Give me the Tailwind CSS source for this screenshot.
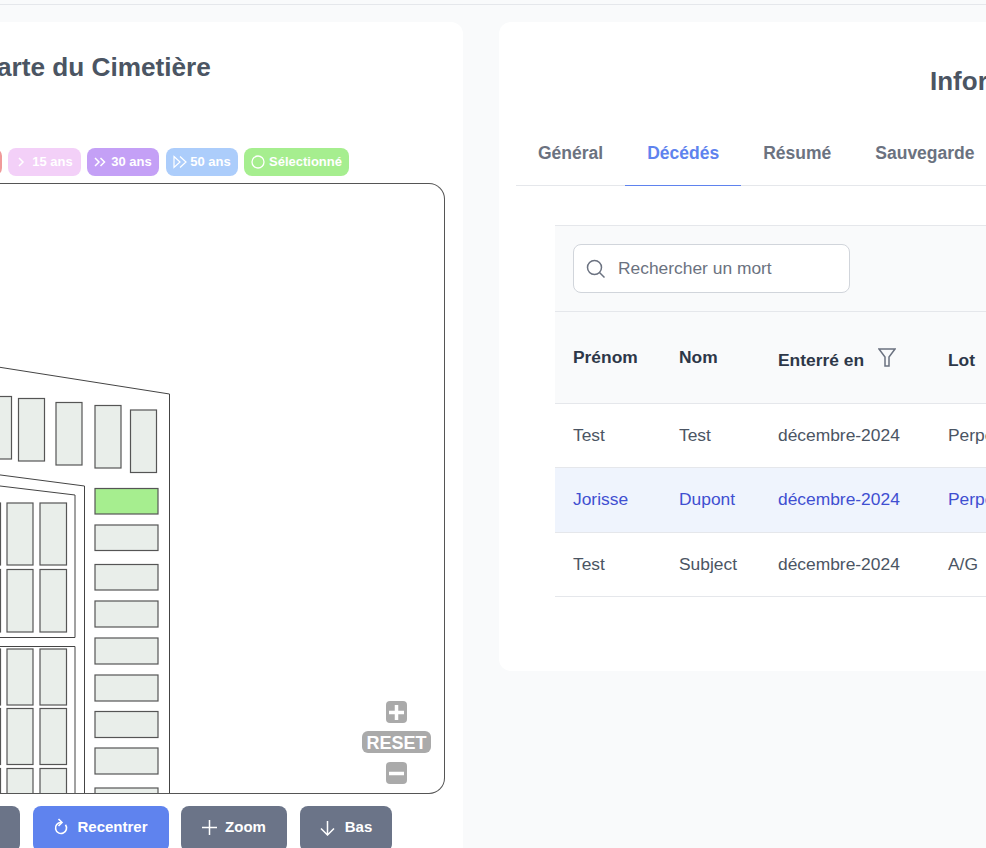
<!DOCTYPE html>
<html lang="fr">
<head>
	<meta charset="UTF-8">
	<title>Carte du Cimetière</title>
	<script src="https://cdn.jsdelivr.net/npm/@tailwindcss/browser@4"></script>
</head>
<body class="bg-[#f9fafb] font-['Liberation_Sans',Arial,sans-serif] overflow-hidden">
	<div class="w-[986px] h-[848px] overflow-hidden">
		<div class="h-[5px] border-b border-[#e5e7eb]"></div>

		<div class="flex items-start gap-[36px] ml-[-36px] mt-[17px] w-[1500px]">
			<!-- carte -->
			<section class="w-[499px] shrink-0 h-[900px] bg-white rounded-xl px-[18px] pt-[29px]">
				<h2 class="text-[26.2px] leading-[32px] font-bold text-[#4b5563] whitespace-nowrap ml-[-4px]">Carte du Cimetière</h2>

				<div class="flex gap-[6px] mt-[65px] ml-[-52px] h-[28px] text-white text-[13px] font-bold">
					<span class="w-[72px] rounded-lg bg-[#f09a9a] flex items-center justify-center">5 ans</span>
					<span class="w-[73px] rounded-lg bg-[#f3d0f8] flex items-center justify-center gap-[7px] pl-[1px]">
						<svg class="w-[8px] h-[10px]" viewBox="0 0 8 10" fill="none" stroke="currentColor" stroke-width="1.500"><path d="M2 1l4 4-4 4"/></svg>
						15 ans
					</span>
					<span class="w-[72px] mr-[1px] rounded-lg bg-[#c4a0f6] flex items-center justify-center gap-[5px]">
						<svg class="w-[12px] h-[10px]" viewBox="0 0 12 10" fill="none" stroke="currentColor" stroke-width="1.500"><path d="M1 1l4 4-4 4M6.500 1l4 4-4 4"/></svg>
						30 ans
					</span>
					<span class="w-[72px] rounded-lg bg-[#accdfb] flex items-center justify-center gap-[3px]">
						<svg class="w-[14px] h-[14px]" viewBox="0 0 14 14" fill="none" stroke="currentColor" stroke-width="1.200"><path d="M1 1.500l6 5.500-6 5.500zM7 1.500l6 5.500-6 5.500"/></svg>
						50 ans
					</span>
					<span class="w-[105px] rounded-lg bg-[#a6ee8f] flex items-center justify-center gap-[4px]">
						<svg class="w-[14px] h-[14px]" viewBox="0 0 14 14" fill="none" stroke="currentColor" stroke-width="1.300"><circle cx="7" cy="7" r="6"/></svg>
						Sélectionné
					</span>
				</div>

				<div class="relative mt-[7px] h-[611px] border border-[#555] rounded-r-2xl overflow-hidden border-l-0">
					<svg class="absolute left-0 top-0" width="463" height="611" viewBox="-18 184 463 611" fill="none">
						<g stroke="#444" stroke-width="1">
							<path d="M-30 362.600 L169.500 394 V800"/>
							<path d="M-30 471 L84.500 486 V800"/>
							<path d="M-30 482.400 L75 495 V637.500 H-30"/>
							<path d="M-30 646.500 H75 V800"/>
						</g>
						<g fill="#e9eeea" stroke="#555" stroke-width="1.200">
							<rect x="-15" y="396.500" width="26.500" height="62.500"/>
							<rect x="18.500" y="398.500" width="26" height="62.500"/>
							<rect x="56" y="402.500" width="26" height="62.500"/>
							<rect x="95" y="405.500" width="26" height="62.500"/>
							<rect x="130.500" y="410" width="26" height="62.500"/>

							<rect x="-20" y="503" width="20.500" height="62"/>
							<rect x="7" y="503" width="26" height="62"/>
							<rect x="40" y="503" width="26.500" height="62"/>
							<rect x="-20" y="569.500" width="20.500" height="62.500"/>
							<rect x="7" y="569.500" width="26" height="62.500"/>
							<rect x="40" y="569.500" width="26.500" height="62.500"/>

							<rect x="-20" y="649" width="20.500" height="56"/>
							<rect x="7" y="649" width="26" height="56"/>
							<rect x="40" y="649" width="26.500" height="56"/>
							<rect x="-20" y="708.500" width="20.500" height="56"/>
							<rect x="7" y="708.500" width="26" height="56"/>
							<rect x="40" y="708.500" width="26.500" height="56"/>
							<rect x="-20" y="768.500" width="20.500" height="60"/>
							<rect x="7" y="768.500" width="26" height="60"/>
							<rect x="40" y="768.500" width="26.500" height="60"/>

							<rect x="95" y="488.500" width="63" height="25.500" fill="#a6ee8f"/>
							<rect x="95" y="525" width="63" height="25.500"/>
							<rect x="95" y="564.500" width="63" height="25.500"/>
							<rect x="95" y="601" width="63" height="26"/>
							<rect x="95" y="638" width="63" height="26"/>
							<rect x="95" y="675" width="63" height="26"/>
							<rect x="95" y="711.500" width="63" height="26"/>
							<rect x="95" y="748" width="63" height="26"/>
							<rect x="95" y="788" width="63" height="26"/>
						</g>
					</svg>

					<!-- controles de zoom -->
					<div class="absolute left-[380px] top-[517px] w-[69px] flex flex-col items-center">
						<div class="w-[21px] h-[22px] rounded bg-[#aaa] flex items-center justify-center">
							<svg class="w-[17px] h-[17px]" viewBox="0 0 17 17" fill="none" stroke="white" stroke-width="3.500"><path d="M1 8.500h15M8.500 1v15"/></svg>
						</div>
						<div class="w-[69px] h-[22px] mt-[8px] rounded-md bg-[#aaa] text-white text-[18px] leading-[24px] font-bold text-center">RESET</div>
						<div class="w-[21px] h-[22px] mt-[9px] rounded bg-[#aaa] flex items-center justify-center">
							<svg class="w-[17px] h-[17px]" viewBox="0 0 17 17" fill="none" stroke="white" stroke-width="3.500"><path d="M1 8.500h15"/></svg>
						</div>
					</div>
				</div>

				<div class="flex mt-[12px] ml-[-82px] text-white text-[15px] font-bold">
					<button class="w-[120px] h-[46px] rounded-lg bg-[#6b7488]">Haut</button>
					<button class="w-[136px] h-[46px] ml-[13px] rounded-lg bg-[#5f83ee] flex items-center justify-center gap-[9px] pb-[3px]">
						<svg class="w-[14px] h-[18px] mt-[-3px]" viewBox="0 0 14 18" fill="none" stroke="currentColor" stroke-width="1.600"><path d="M7 5.500A5.500 5.500 0 1 0 11.500 7.800"/><path d="M4.500 2l3.500 3.500-3.500 3.500"/></svg>
						Recentrer
					</button>
					<button class="w-[106px] h-[46px] ml-[12px] rounded-lg bg-[#6b7488] flex items-center justify-center gap-[8px] pb-[3px]">
						<svg class="w-[15px] h-[15px]" viewBox="0 0 15 15" fill="none" stroke="currentColor" stroke-width="1.500"><path d="M0 7.500h15M7.500 0v15"/></svg>
						Zoom
					</button>
					<button class="w-[92px] h-[46px] ml-[13px] rounded-lg bg-[#6b7488] flex items-center justify-center gap-[10px] pb-[3px]">
						<svg class="w-[15px] h-[16px]" viewBox="0 0 15 16" fill="none" stroke="currentColor" stroke-width="1.500"><path d="M7.500 1v14M1 8.500l6.500 6.500 6.500-6.500"/></svg>
						Bas
					</button>
				</div>
			</section>

			<!-- informations -->
			<section class="w-[900px] shrink-0 bg-white rounded-xl pt-[43px] pb-[74px]">
				<h2 class="text-[26px] leading-[32px] font-bold text-[#4b5563] pl-[431px] whitespace-nowrap">Informations</h2>

				<nav class="flex ml-[17px] mt-[44px] border-b border-[#e5e7eb] font-bold text-[17.5px] text-[#6b7280]">
					<a class="px-[22px] pb-[20px] leading-6">Général</a>
					<a class="px-[22px] pb-[20px] leading-6 text-[#5f83ee] border-b border-[#5f83ee] mb-[-1px]">Décédés</a>
					<a class="px-[22px] pb-[20px] leading-6">Résumé</a>
					<a class="px-[22px] pb-[20px] leading-6">Sauvegarde</a>
				</nav>

				<div class="ml-[56px] mt-[39px] border-t border-[#e5e7eb] text-[17.4px]">
					<div class="bg-[#f9fafb] pl-[18px] pt-[18px] pb-[18px]">
						<div class="w-[277px] h-[49px] bg-white border border-[#d1d5db] rounded-lg flex items-center pl-[12px] gap-[13px] text-[#6b7280]">
							<svg class="w-[19px] h-[19px]" viewBox="0 0 19 19" fill="none" stroke="currentColor" stroke-width="1.500"><circle cx="8.500" cy="8.500" r="7"/><path d="M13.500 13.500l5 5"/></svg>
							<span>Rechercher un mort</span>
						</div>
					</div>

					<table class="table-fixed border-collapse w-[844px] text-left">
						<thead class="bg-[#f9fafb] text-[#2d3748]">
							<tr class="h-[92px] border-y border-[#e5e7eb]">
								<th class="w-[106px] pl-[18px] font-bold">Prénom</th>
								<th class="w-[99px] pl-[18px] font-bold">Nom</th>
								<th class="w-[170px] pl-[18px] pt-[6px] font-bold">
									<div class="flex items-center">
										Enterré en
										<svg class="w-[18px] h-[19px] ml-[14px] mt-[-6px]" viewBox="0 0 18 19" fill="none" stroke="#6b7280" stroke-width="1.500"><path d="M1 1h16l-6 8v9h-4v-9z"/></svg>
									</div>
								</th>
								<th class="pl-[18px] pt-[6px] font-bold">Lot</th>
							</tr>
						</thead>
						<tbody class="text-[#4b5563]">
							<tr class="h-[64px] border-b border-[#e5e7eb]">
								<td class="pl-[18px]">Test</td>
								<td class="pl-[18px]">Test</td>
								<td class="pl-[18px]">décembre-2024</td>
								<td class="pl-[18px]">Perpétuelle</td>
							</tr>
							<tr class="h-[65px] border-b border-[#e5e7eb] bg-[#eff4fd] text-[#3f4fd1]">
								<td class="pl-[18px] pb-[2px]">Jorisse</td>
								<td class="pl-[18px] pb-[2px]">Dupont</td>
								<td class="pl-[18px] pb-[2px]">décembre-2024</td>
								<td class="pl-[18px] pb-[2px]">Perpétuelle</td>
							</tr>
							<tr class="h-[64px] border-b border-[#e5e7eb]">
								<td class="pl-[18px]">Test</td>
								<td class="pl-[18px]">Subject</td>
								<td class="pl-[18px]">décembre-2024</td>
								<td class="pl-[18px]">A/G</td>
							</tr>
						</tbody>
					</table>
				</div>
			</section>
		</div>
	</div>
</body>
</html>
